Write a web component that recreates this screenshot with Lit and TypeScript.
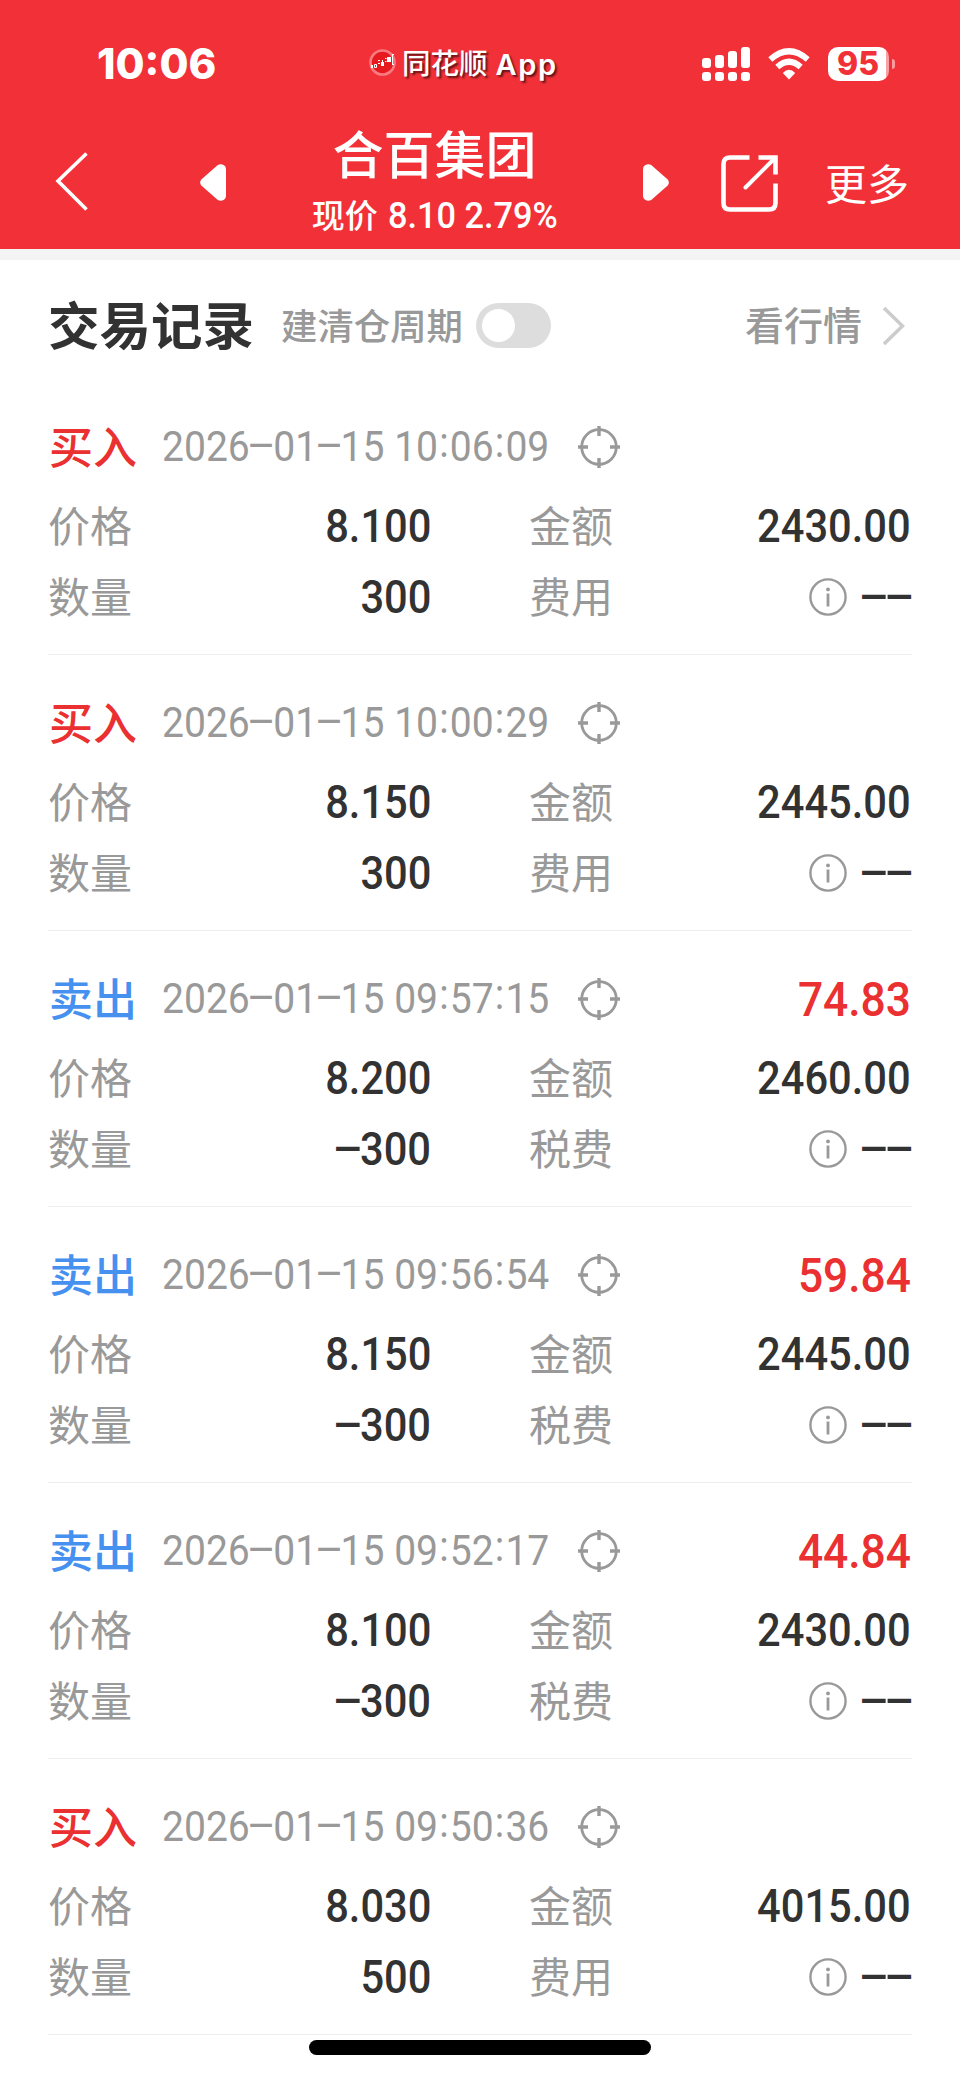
import { LitElement, html, css, svg, nothing } from "lit";
import { customElement, property } from "lit/decorators.js";

interface Trade {
  side: "buy" | "sell";
  time: string;
  price: string;
  amount: string;
  count: string;
  profit?: string;
}

const TRADES: Trade[] = [
  { side: "buy", time: "2026–01–15 10:06:09", price: "8.100", amount: "2430.00", count: "300" },
  { side: "buy", time: "2026–01–15 10:00:29", price: "8.150", amount: "2445.00", count: "300" },
  { side: "sell", time: "2026–01–15 09:57:15", price: "8.200", amount: "2460.00", count: "–300", profit: "74.83" },
  { side: "sell", time: "2026–01–15 09:56:54", price: "8.150", amount: "2445.00", count: "–300", profit: "59.84" },
  { side: "sell", time: "2026–01–15 09:52:17", price: "8.100", amount: "2430.00", count: "–300", profit: "44.84" },
  { side: "buy", time: "2026–01–15 09:50:36", price: "8.030", amount: "4015.00", count: "500" },
];

// Narrow figures; dashes take a fixed cell and colons are centred on the digits.
@customElement("num-text")
export class NumText extends LitElement {
  @property() value = "";

  static styles = css`
    :host { display: inline-block; font-family: Roboto, "Noto Sans CJK SC", sans-serif; white-space: pre; transform: scaleX(var(--narrow, 0.93)); transform-origin: var(--origin, right) center; line-height: 1; }
    .dash { display: inline-flex; justify-content: center; width: 0.6em; }
    .stroke { display: inline-block; transform: scaleX(1.13); }
    .colon { display: inline-flex; justify-content: center; width: 0.3em; transform: translateY(-0.09em); }
  `;

  render() {
    return this.value.split(/([–:])/).map((part) =>
      part === "–" ? html`<span class="dash"><span class="stroke">–</span></span>`
      : part === ":" ? html`<span class="colon">:</span>`
      : part);
  }
}

@customElement("trade-record")
export class TradeRecord extends LitElement {
  @property({ attribute: false }) trade!: Trade;

  static styles = css`
    :host { display: block; box-sizing: border-box; height: 276px; padding-top: 33px; border-bottom: 1px solid #ededed; }
    .head { display: flex; align-items: center; height: 70px; }
    .side { width: 114px; box-sizing: border-box; padding-left: 1px; font-size: 44px; font-weight: 500; line-height: 67px; height: 70px; }
    .buy { color: #ea3030; }
    .sell { color: #4691f0; }
    .time { --origin: left; width: 418px; font-size: 42px; color: #999; margin-right: -2px; }
    .target { display: block; width: 42px; height: 42px; }
    .profit { --narrow: 0.905; margin-left: auto; margin-right: 1px; font-size: 49px; font-weight: 500; color: #ea3030; }
    .grid { display: grid; grid-template-columns: 120px 263px 98px 120px 1fr; grid-template-rows: 71px 71px; align-items: center; margin-top: 9px; }
    .label { font-size: 42px; color: #999; line-height: 66px; height: 71px; white-space: nowrap; }
    .right { grid-column: 4; }
    .value { --narrow: 0.905; display: flex; justify-content: flex-end; align-items: center; height: 69px; padding-bottom: 2px; font-size: 46px; font-weight: 500; color: #323232; }
    .end { padding-right: 1px; }
    .info { width: 38px; height: 38px; margin-right: 9px; }
  `;

  render() {
    const t = this.trade;
    const buy = t.side === "buy";
    return html`
      <div class="head">
        <span class="side ${t.side}">${buy ? "买入" : "卖出"}</span>
        <num-text class="time" .value=${t.time}></num-text>
        <svg class="target" viewBox="0 0 42 42" fill="none" stroke="#999" stroke-width="2.8">
          <circle cx="21" cy="21" r="17.3" />
          <path d="M21 0V10M21 32V42M0 21H10M32 21H42" stroke-width="3.4" />
        </svg>
        ${t.profit ? html`<num-text class="profit" .value=${t.profit}></num-text>` : nothing}
      </div>
      <div class="grid">
        <span class="label">价格</span>
        <span class="value"><num-text .value=${t.price}></num-text></span>
        <span class="label right">金额</span>
        <span class="value end"><num-text .value=${t.amount}></num-text></span>
        <span class="label">数量</span>
        <span class="value"><num-text .value=${t.count}></num-text></span>
        <span class="label right">${buy ? "费用" : "税费"}</span>
        <span class="value end">
          <svg class="info" viewBox="0 0 38 38" fill="none" stroke="#999">
            <circle cx="19" cy="19" r="17.6" stroke-width="2.4" />
            <circle cx="19" cy="11.4" r="1.9" fill="#999" stroke="none" />
            <path d="M19 15.5V28.5" stroke-width="2.8" />
          </svg>
          <num-text .value=${"––"}></num-text>
        </span>
      </div>
    `;
  }
}

const signal = svg`<g fill="#fff">
  <rect x="0" y="11" width="9" height="10" rx="3"/><rect x="13" y="8" width="9" height="13" rx="3"/>
  <rect x="26" y="4" width="9" height="17" rx="3"/><rect x="39" y="0" width="9" height="21" rx="3"/>
  <rect x="0" y="25" width="9" height="9" rx="3"/><rect x="13" y="25" width="9" height="9" rx="3"/>
  <rect x="26" y="25" width="9" height="9" rx="3"/><rect x="39" y="25" width="9" height="9" rx="3"/></g>`;

@customElement("app-root")
export class AppRoot extends LitElement {
  static styles = css`
    :host { display: block; position: relative; width: 960px; height: 2079px; overflow: hidden; background: #fff; font-family: "Noto Sans CJK SC", sans-serif; }
    svg { display: block; flex: none; }
    .top { height: 249px; background: #f23038; color: #fff; border-bottom: 11px solid #f4f4f4; }
    .status { display: flex; align-items: center; height: 128px; box-sizing: border-box; padding: 0 63px 0 97px; }
    .clock { width: 272px; font: 800 42px/1 Inter, sans-serif; letter-spacing: 0; }
    .source { display: flex; align-items: center; width: 333px; font: 500 28.5px/1 Inter, "Noto Sans CJK SC", sans-serif; text-shadow: 2px 2px 2px #0009; }
    .logo { width: 27px; height: 27px; margin: -4px 6px 0 0; }
    .app { margin-left: 8px; font-weight: 600; font-size: 29px; letter-spacing: 1.6px; }
    .wifi { margin-left: 18px; }
    .battery { display: flex; align-items: center; margin-left: 18px; }
    .cell { display: flex; align-items: center; justify-content: center; box-sizing: border-box; width: 61px; height: 34px; padding-right: 1px; border-radius: 10px; background: linear-gradient(90deg, #fff 58px, #f9a0a4 58px); color: #f23038; font: 800 32px/1 Inter, sans-serif; }
    .cap { width: 3px; height: 10px; margin-left: 3px; border-radius: 0 4px 4px 0; background: #f99a9e; }
    .nav { display: flex; height: 121px; align-items: flex-start; }
    .back { margin: 23px 0 0 54px; }
    .prev { margin: 36px 0 0 111px; }
    .stock { display: flex; flex-direction: column; align-items: center; width: 417px; }
    .next { margin: 36px 0 0 0; }
    .name { font-size: 51px; line-height: 55px; height: 58px; margin-top: -3px; font-weight: 500; }
    .quote { display: flex; align-items: center; height: 62px; line-height: 60px; font-size: 33px; gap: 10px; font-weight: 500; }
    .quote num-text { --origin: left; --narrow: 0.94; font-size: 36.5px; margin: 4px -11px 0 0; font-weight: 500; }
    .share { margin: 27px 0 0 52px; }
    .more { font-size: 42px; line-height: 60px; margin: 24px 0 0 47px; }
    .bar { display: flex; align-items: center; height: 119px; padding: 12px 55px 0 48px; box-sizing: border-box; color: #999; }
    .title { font-size: 51.5px; font-weight: 700; color: #323232; width: 233px; line-height: 80px; margin-top: -6px; }
    .cycle { font-size: 36.4px; font-weight: 500; width: 195px; line-height: 80px; margin-top: -4px; }
    .toggle { width: 75px; height: 45px; border-radius: 23px; background: #ddd; padding: 6px; box-sizing: border-box; }
    .knob { width: 33px; height: 33px; border-radius: 50%; background: #fff; }
    .quotes { margin-left: auto; font-size: 39px; font-weight: 500; line-height: 80px; margin-top: -5px; }
    .arrow { margin-left: 20px; }
    .list { display: block; padding: 0 48px; }
    .home { position: absolute; left: 309px; bottom: 24px; width: 342px; height: 15px; border-radius: 8px; background: #000; }
  `;

  render() {
    return html`
      <header class="top">
        <div class="status">
          <span class="clock">10:06</span>
          <div class="source">
            <svg class="logo" viewBox="0 0 27 27">
              <circle cx="13.5" cy="13.5" r="12" fill="#e6191f" stroke="#f77b80" stroke-width="2.6" />
              <path d="M2 16h2v3H2zM12 13h3v4h-3zM18 8h4v5h-4zM9 11h2v1H9zM9 14h2v1H9zM16 9h1.500v1H16zM16 12h1.500v1H16zM13 11h1v2h-1zM23 5h2v1h-1v9h1v1h-2z" fill="#fff" />
              <path d="M5.500 15.500h2v3h-2z" fill="none" stroke="#fff" />
            </svg>
            <span>同花顺</span><span class="app">App</span>
          </div>
          <svg width="48" height="34" viewBox="0 0 48 34">${signal}</svg>
          <svg class="wifi" width="42" height="32" viewBox="0 0 42 32" fill="none" stroke="#fff" stroke-width="6">
            <path d="M2.300 11.500Q21 -5 39.700 11.500" />
            <path d="M9.300 19Q21 8.500 32.700 19" />
            <path d="M14.800 25Q21 18.500 27.200 25L21 31.500Z" fill="#fff" stroke="none" />
          </svg>
          <div class="battery"><div class="cell">95</div><div class="cap"></div></div>
        </div>
        <nav class="nav">
          <svg class="back" width="35" height="60" viewBox="0 0 35 60" fill="none" stroke="#fff" stroke-width="3.6"><path d="M32.500 2.500L4 30L32.500 58.500" /></svg>
          <svg class="prev" width="26" height="37" viewBox="0 0 26 37" fill="#fff"><path d="M1.300 15.500L17.500 1.300Q20.500 -.8 24 1.200Q26 2.500 26 5V32Q26 34.500 24 35.800Q20.500 37.800 17.500 35.700L1.300 21.500Q-1 18.500 1.300 15.500Z" /></svg>
          <div class="stock">
            <div class="name">合百集团</div>
            <div class="quote"><span>现价</span><num-text .value=${"8.10 2.79%"}></num-text></div>
          </div>
          <svg class="next" width="26" height="37" viewBox="0 0 26 37" fill="#fff"><path d="M24.700 15.500L8.500 1.300Q5.500 -.8 2 1.200Q0 2.500 0 5V32Q0 34.500 2 35.800Q5.500 37.800 8.500 35.700L24.700 21.500Q27 18.500 24.700 15.500Z" /></svg>
          <svg class="share" width="57" height="57" viewBox="0 0 57 57" fill="none" stroke="#fff" stroke-width="4.600">
            <path d="M28.500 2.500H9Q2.500 2.500 2.500 9V48Q2.500 54.500 9 54.500H48Q54.500 54.500 54.500 48V28.500M37.500 2.500H54.500V19.500" />
            <path d="M53.500 3.500L24.500 32.500" stroke-width="4" stroke-linecap="round" />
          </svg>
          <span class="more">更多</span>
        </nav>
      </header>
      <section class="bar">
        <span class="title">交易记录</span>
        <span class="cycle">建清仓周期</span>
        <div class="toggle"><div class="knob"></div></div>
        <span class="quotes">看行情</span>
        <svg class="arrow" width="23" height="40" viewBox="0 0 23 40" fill="none" stroke="#ccc" stroke-width="3.600"><path d="M2 2L20.500 20L2 38" /></svg>
      </section>
      <main class="list">${TRADES.map((t) => html`<trade-record .trade=${t}></trade-record>`)}</main>
      <div class="home"></div>
    `;
  }
}
